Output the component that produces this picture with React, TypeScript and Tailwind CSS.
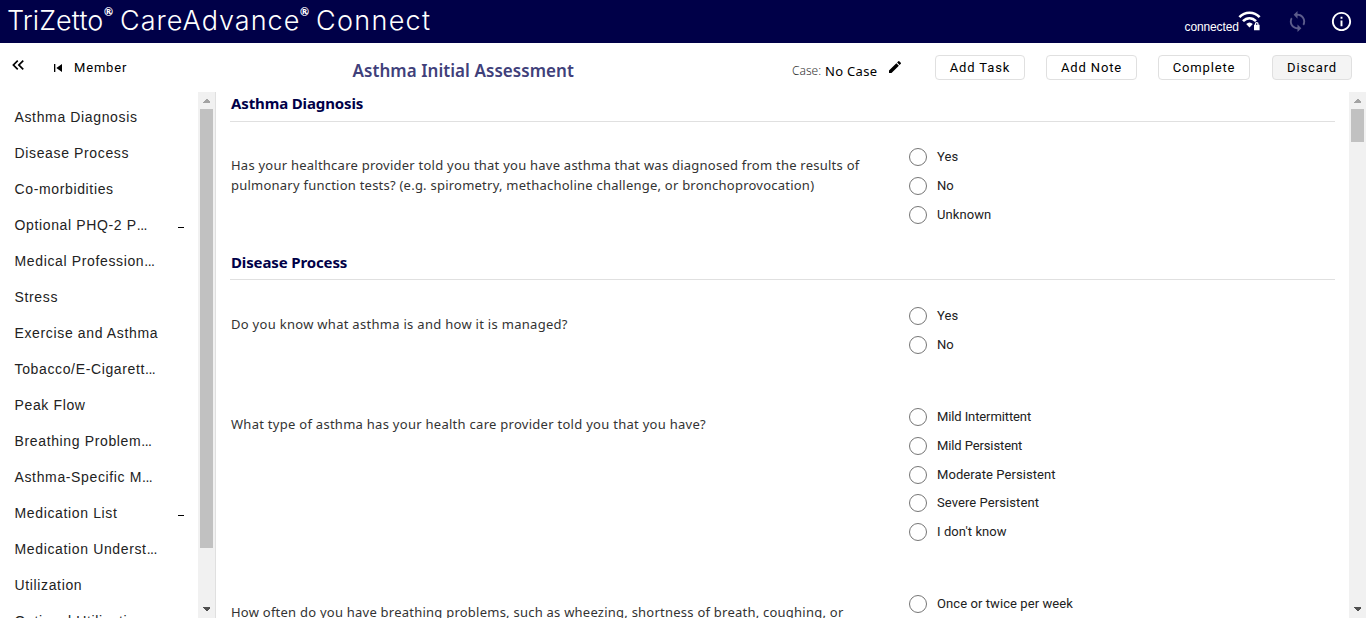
import React from "react";
import { MdEdit, MdInfoOutline, MdKeyboardDoubleArrowLeft, MdSkipPrevious, MdSync } from "react-icons/md";

const navItems: { label: string; cut?: boolean; open?: boolean }[] = [
  { label: "Asthma Diagnosis" },
  { label: "Disease Process" },
  { label: "Co-morbidities" },
  { label: "Optional PHQ-2 P", cut: true, open: true },
  { label: "Medical Profession", cut: true },
  { label: "Stress" },
  { label: "Exercise and Asthma" },
  { label: "Tobacco/E-Cigarett", cut: true },
  { label: "Peak Flow" },
  { label: "Breathing Problem", cut: true },
  { label: "Asthma-Specific M", cut: true },
  { label: "Medication List", open: true },
  { label: "Medication Underst", cut: true },
  { label: "Utilization" },
  { label: "Optional Utilizati", cut: true },
];

function WifiLock() {
  return (
    <svg width="23" height="21" viewBox="0 0 23 21" className="shrink-0">
      <g fill="none" stroke="#fff" strokeWidth="2.6">
        <path d="M1.4 6.2 C7 0.2 16 0.2 21.6 6.2" />
        <path d="M5 10.2 C8.8 6.2 14.2 6.2 18 10.2" />
      </g>
      <path d="M8.2 13 Q11.5 10 14.8 13 L11.5 16.6Z" fill="#fff" />
      <path d="M16 13.8h.8V13a1.9 1.9 0 0 1 3.8 0v.8h1V19.3h-5.6z" fill="#fff" />
      <path d="M18 13.8V13a.7.7 0 0 1 1.4 0v.8z" fill="#000048" />
    </svg>
  );
}

function Arrow({ down }: { down?: boolean }) {
  return (
    <svg width="17" height="17" viewBox="0 0 17 17" className="block shrink-0" shapeRendering="crispEdges">
      <path d={down ? "M5 6h7v1L8.5 10.5 5 7z" : "M5 11h7v-1L8.5 6.5 5 10z"} fill={down ? "#505050" : "#a3a3a3"} />
    </svg>
  );
}

function Scrollbar({ thumb }: { thumb: string }) {
  return (
    <div className="flex h-[526px] w-[17px] shrink-0 flex-col bg-[#f1f1f1]">
      <Arrow />
      <div className={`ml-0.5 w-[13px] bg-[#c1c1c1] ${thumb}`} />
      <div className="flex-1" />
      <Arrow down />
    </div>
  );
}

function ActionButton({ children, className }: { children: React.ReactNode; className: string }) {
  return (
    <button
      className={`h-[25px] shrink-0 rounded border border-[#e0e0e0] font-[Roboto,sans-serif] text-[13px] leading-[23px] tracking-[0.87px] text-black ${className}`}
    >
      {children}
    </button>
  );
}

function SectionTitle({ children, leading }: { children: string; leading: string }) {
  return (
    <h2 className={`h-[30px] w-[1105px] border-b border-[#e0e0e0] pl-px font-['Noto_Sans',sans-serif] text-[15px] font-bold tracking-[-0.13px] text-[#000048] ${leading}`}>
      {children}
    </h2>
  );
}

function Question({ lines, options, className, textTop }: { lines: { text: string; fit: string }[]; options: string[]; className: string; textTop: string }) {
  return (
    <div className={`flex items-start ${className}`}>
      <div className={`w-[679px] shrink-0 pl-px font-['Noto_Sans',sans-serif] text-[13px] leading-5 text-[#333] ${textTop}`}>
        {lines.map((l) => (
          <p key={l.text} className={`whitespace-nowrap ${l.fit}`}>{l.text}</p>
        ))}
      </div>
      <div className="flex flex-col">
        {options.map((o) => (
          <label key={o} className="flex h-[28.75px] items-start">
            <input type="radio" className="size-[18px] shrink-0 appearance-none rounded-full border border-[#767676] bg-white" />
            <span
              className={`ml-2.5 font-[Roboto,sans-serif] text-[13px] leading-[18px] whitespace-nowrap text-[#212121] ${o.startsWith("Mild") ? "tracking-[-0.11px]" : "tracking-[0.08px]"}`}
            >
              {o}
            </span>
          </label>
        ))}
      </div>
    </div>
  );
}

export default function App() {
  return (
    <div className="flex h-[618px] w-[1366px] flex-col overflow-hidden bg-white">
      <header className="flex h-[43px] shrink-0 items-start bg-[#000048] text-white">
        <h1 className="flex w-[1184px] items-start pl-[7px] font-[Inter,sans-serif] text-[27px] leading-[41px] font-light whitespace-nowrap">
          <span className="w-[97px] tracking-[0.1px]">TriZetto</span>
          <span className="w-[16px] pt-[7px] font-[Lato,sans-serif] text-[11px] leading-[10px] font-black">®</span>
          <span className="w-[180px] tracking-[1.02px]">CareAdvance</span>
          <span className="w-[16px] pt-[7px] font-[Lato,sans-serif] text-[11px] leading-[10px] font-black">®</span>
          <span className="tracking-[1.3px]">Connect</span>
        </h1>
        <div className="flex pt-[11px]">
          <span className="w-[54px] pt-[7px] pl-[0.5px] font-['Liberation_Sans',sans-serif] text-[12px] leading-[18px] tracking-[-0.12px]">connected</span>
          <WifiLock />
          <MdSync className="-mt-[1px] ml-[25px] size-[23px] text-[#5c5c8b]" />
          <MdInfoOutline className="-mt-[1px] ml-[21px] size-[23px]" />
        </div>
      </header>

      <div className="flex h-[49px] shrink-0 items-start">
        <MdKeyboardDoubleArrowLeft className="mt-[12px] ml-[8px] size-[20px] shrink-0 text-black" />
        <MdSkipPrevious className="mt-[17px] ml-[22px] size-4 shrink-0 text-black" />
        <span className="mt-[15px] ml-2 w-[278px] font-[Roboto,sans-serif] text-[13px] leading-5 tracking-[0.82px] text-black">Member</span>
        <h2 className="mt-4 w-[440px] pl-[0.5px] font-['Noto_Sans',sans-serif] text-[17px] leading-6 font-semibold tracking-[0.06px] text-[#40407a]">
          Asthma Initial Assessment
        </h2>
        <span className="mt-[18px] w-[33px] font-['Noto_Sans',sans-serif] text-[12px] leading-5 font-light text-[#333]">Case:</span>
        <span className="mt-[18px] w-[62px] font-['Noto_Sans',sans-serif] text-[13px] leading-5 tracking-[0.3px] whitespace-nowrap text-black">No Case</span>
        <MdEdit className="mt-4 size-4 shrink-0 text-black" />
        <div className="mt-3 ml-8 flex">
          <ActionButton className="w-[90px]">Add Task</ActionButton>
          <ActionButton className="ml-[21px] w-[91px]">Add Note</ActionButton>
          <ActionButton className="ml-[21px] w-[92px]">Complete</ActionButton>
          <ActionButton className="ml-[22px] w-[80px] bg-[#f4f4f4]">Discard</ActionButton>
        </div>
      </div>

      <div className="flex h-[526px] overflow-hidden">
        <nav className="flex w-[216px] shrink-0 border-r border-[#e0e0e0]">
          <ul className="w-[198px] shrink-0 pt-[7px] font-['Liberation_Sans',sans-serif] text-[14px] tracking-[0.64px] text-[#222]">
            {navItems.map((n) => (
              <li key={n.label} className="flex h-9 items-center pl-[14.5px] whitespace-nowrap">
                <span className="w-[163px]">
                  {n.label}
                  {n.cut && <span className="tracking-[-0.5px]">...</span>}
                </span>
                {n.open && <span className="mt-[5px] h-px w-1.5 bg-black" />}
              </li>
            ))}
          </ul>
          <Scrollbar thumb="h-[439px]" />
        </nav>
        <main className="w-[1133px] shrink-0 pl-[14px]">
          <SectionTitle leading="leading-[22px]">Asthma Diagnosis</SectionTitle>
          <Question
            className="h-[128px] pt-[26px]"
            textTop="pt-[7px]"
            lines={[
              { text: "Has your healthcare provider told you that you have asthma that was diagnosed from the results of", fit: "tracking-[0.238px]" },
              { text: "pulmonary function tests? (e.g. spirometry, methacholine challenge, or bronchoprovocation)", fit: "tracking-[0.233px]" },
            ]}
            options={["Yes", "No", "Unknown"]}
          />
          <SectionTitle leading="leading-[24px]">Disease Process</SectionTitle>
          <Question
            className="h-[101px] pt-[27px]"
            textTop="pt-[7px]"
            lines={[{ text: "Do you know what asthma is and how it is managed?", fit: "tracking-[0.29px]" }]}
            options={["Yes", "No"]}
          />
          <Question
            className="h-[187px] pt-[27px]"
            textTop="pt-[6px]"
            lines={[{ text: "What type of asthma has your health care provider told you that you have?", fit: "tracking-[0.275px]" }]}
            options={["Mild Intermittent", "Mild Persistent", "Moderate Persistent", "Severe Persistent", "I don't know"]}
          />
          <Question
            className="h-[100px] pt-[27px]"
            textTop="pt-[7px]"
            lines={[{ text: "How often do you have breathing problems, such as wheezing, shortness of breath, coughing, or", fit: "tracking-[0.236px]" }]}
            options={["Once or twice per week"]}
          />
        </main>
        <Scrollbar thumb="h-[33px]" />
      </div>
    </div>
  );
}
